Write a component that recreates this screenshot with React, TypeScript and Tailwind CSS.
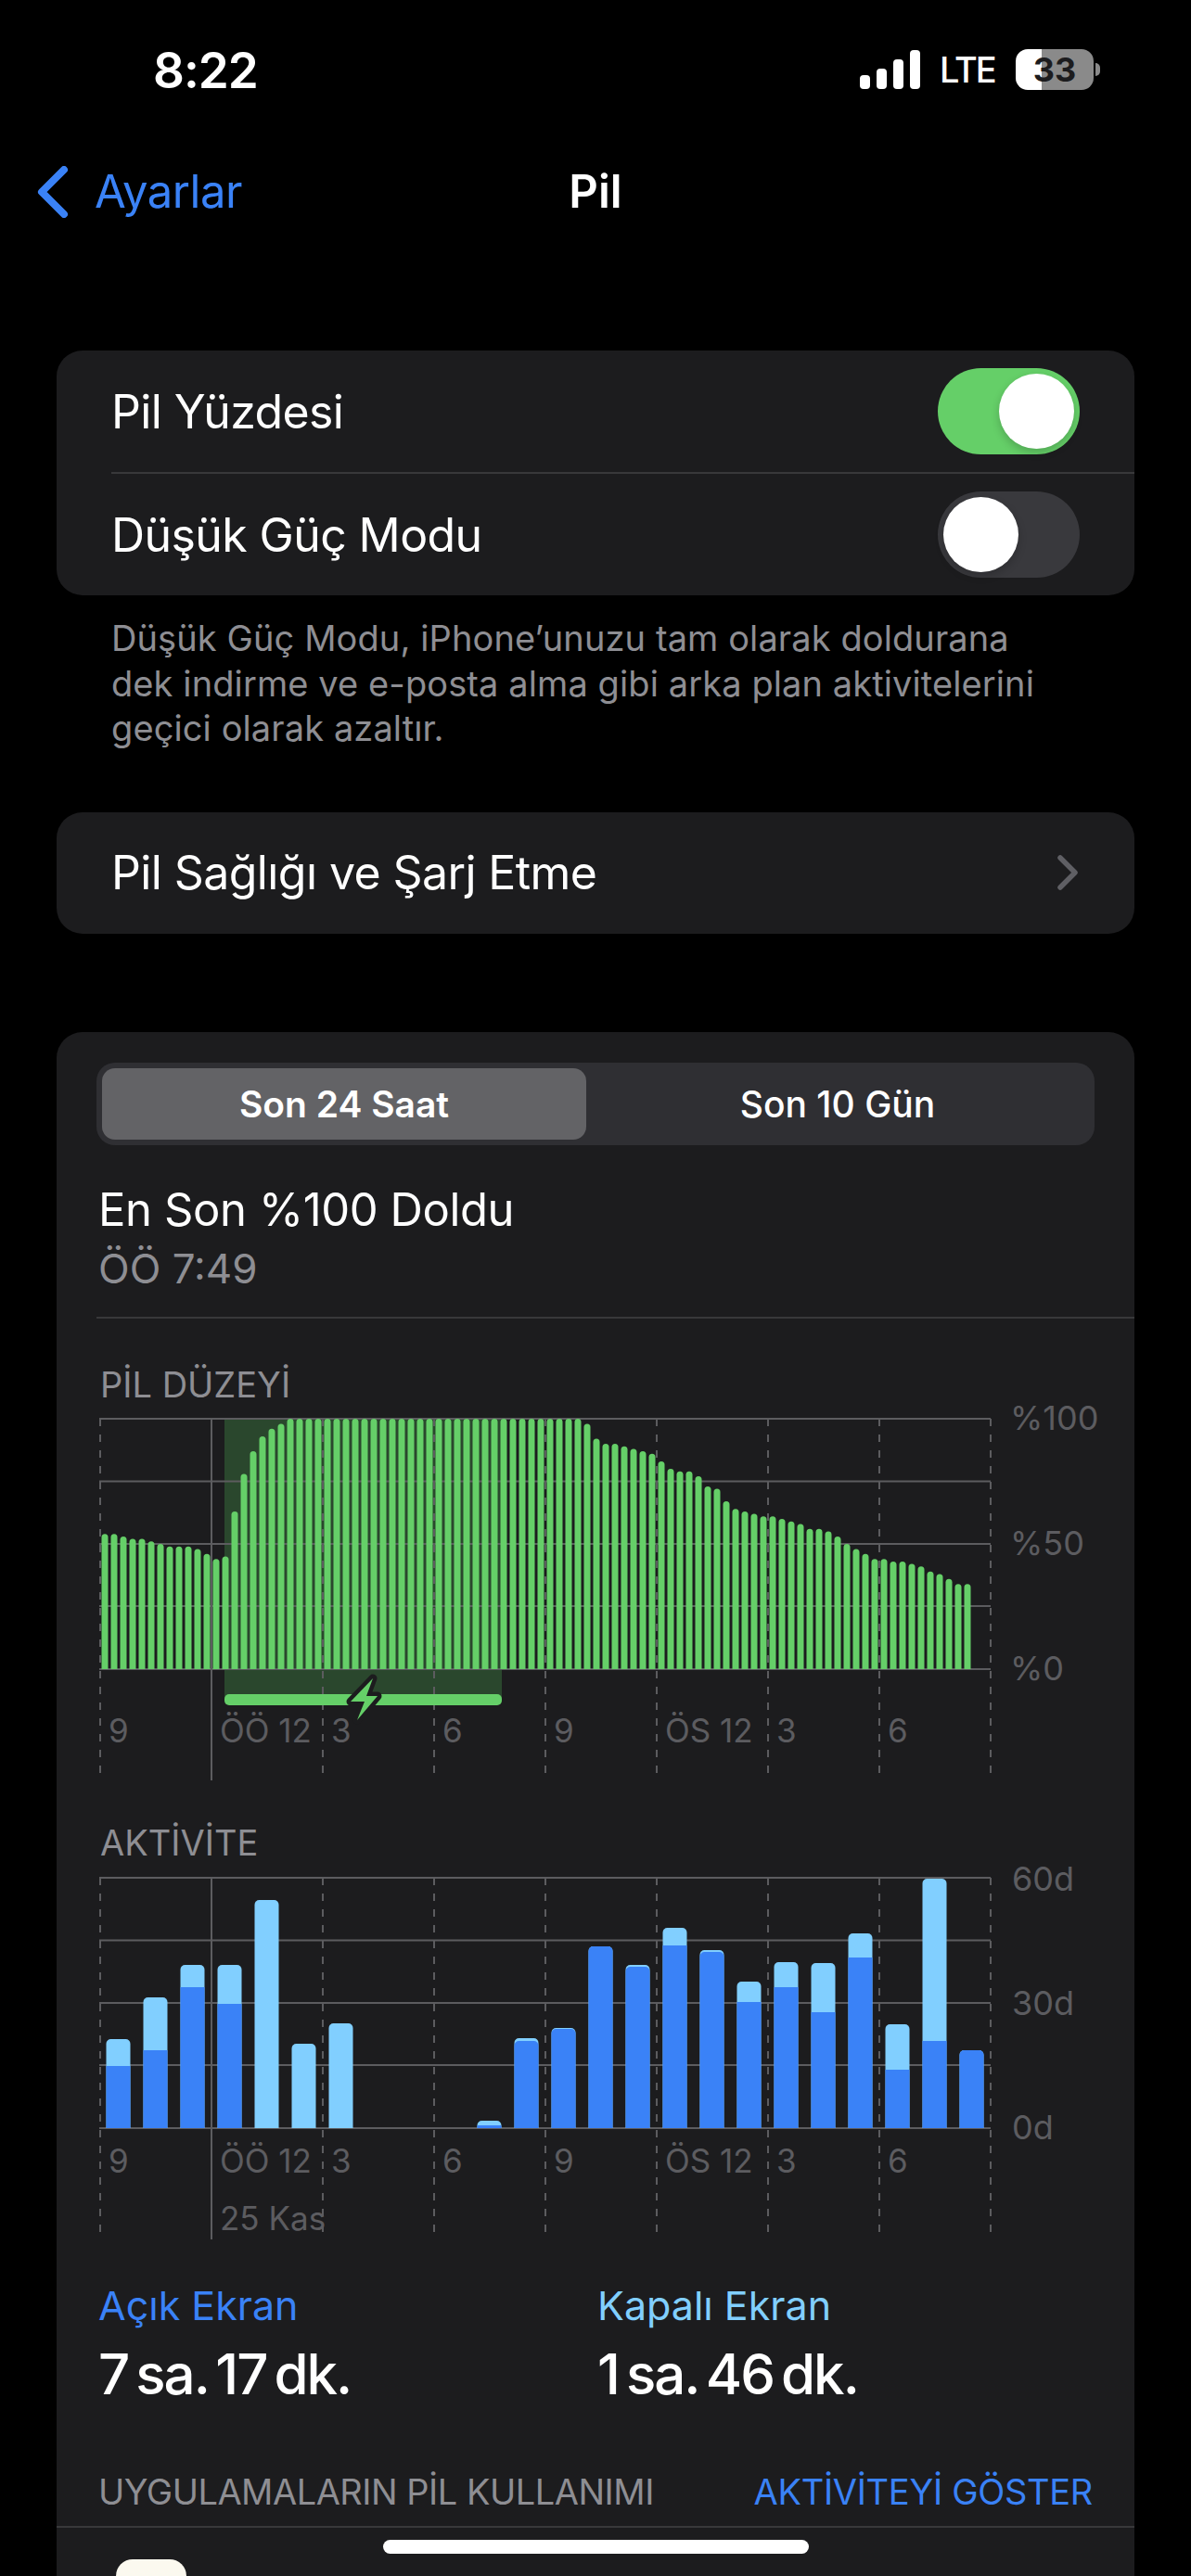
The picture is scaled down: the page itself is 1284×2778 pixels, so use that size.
import React from 'react';

const BATTERY: number[] = [
  54, 54, 53, 52, 52, 51, 50, 49, 49, 49, 48, 46, 44, 45, 63, 78, 87, 93, 96, 98,
  ...Array(32).fill(100),
  98, 92, 90, 90, 89, 88, 87, 86, 83, 80, 79, 79, 77, 73, 72, 67, 64, 63, 62, 61, 61, 60, 59, 58,
  56, 56, 55, 53, 50, 48, 46, 44, 44, 43, 43, 42, 41, 39, 38, 36, 34, 34,
];

// [total top, blue top] as y positions inside the plot (0 = top, 270 = baseline)
const ACTIVITY: [number, number][] = [
  [174, 203], [129, 186], [94, 118], [94, 136], [24, 270], [179, 270], [157, 270],
  [270, 270], [270, 270], [270, 270],
  [262, 267], [173, 176], [162, 163], [74, 74], [94, 96], [54, 73], [78, 80],
  [112, 134], [91, 118], [92, 145], [60, 86], [158, 207], [1, 176], [186, 186],
];

const GRID_X = [0, 120, 240, 360, 480, 600, 720, 840, 960];

function roundedTop(x: number, w: number, top: number, bottom: number, r: number) {
  return `M${x} ${bottom}V${top + r}A${r} ${r} 0 0 1 ${x + r} ${top}H${x + w - r}A${r} ${r} 0 0 1 ${x + w} ${top + r}V${bottom}Z`;
}

function Toggle({ on }: { on: boolean }) {
  return (
    <div className={`flex h-[93px] w-[153px] items-center rounded-full px-[6px] ${on ? 'justify-end bg-[#65cf68]' : 'justify-start bg-[#39393d]'}`}>
      <div className="h-[81px] w-[81px] rounded-full bg-white shadow-[0_4px_10px_rgba(0,0,0,0.2)]" />
    </div>
  );
}

function AxisLabels({ labels }: { labels: string[] }) {
  return (
    <div className="grid w-[960px] grid-cols-8 text-[35px] leading-[42px] text-[#5c5c60]">
      {labels.map((label, i) => (
        <div key={i} className="whitespace-nowrap pl-[10px]">{label}</div>
      ))}
    </div>
  );
}

function GridLines({ bottom, solidBottom }: { bottom: number; solidBottom: number }) {
  return (
    <g>
      {[1, 68.5, 136, 203, 271].map((y) => (
        <line key={y} x1="0" x2="961" y1={y} y2={y} stroke="#5c5c5f" strokeWidth="2" />
      ))}
      {GRID_X.map((x) =>
        x === 120 ? (
          <line key={x} x1={x + 1} x2={x + 1} y1="1" y2={solidBottom} stroke="#5c5c5f" strokeWidth="2" />
        ) : (
          <line key={x} x1={x + 1} x2={x + 1} y1="1" y2={bottom} stroke="#5c5c5f" strokeWidth="2" strokeDasharray="8 9" />
        ),
      )}
    </g>
  );
}

function BatteryChart() {
  return (
    <div className="relative h-[392px] w-[1070px]">
      <svg width="970" height="392" viewBox="0 0 970 392" className="block">
        <rect x="135" y="1" width="299" height="304" fill="#2a472d" />
        <GridLines bottom={384} solidBottom={391} />
        {BATTERY.map((level, i) => {
          const top = 271 - level * 2.7;
          return <path key={i} d={roundedTop(2.5 + i * 10, 7, top, 271, 3.5)} fill="#65cf68" />;
        })}
        <rect x="135" y="298" width="299" height="12" rx="5" fill="#65cf68" />
        <path
          d="M295 281L271 306H286L278 326L300 300H288Z"
          fill="#65cf68"
          stroke="#1c1c1e"
          strokeWidth="9"
          strokeLinejoin="round"
          paintOrder="stroke"
        />
      </svg>
      <div className="absolute left-[982px] top-[-22px] flex h-[314px] flex-col justify-between text-[36px] leading-[44px] text-[#5c5c60]">
        <span>%100</span>
        <span>%50</span>
        <span>%0</span>
      </div>
      <div className="absolute left-0 top-[316px]">
        <AxisLabels labels={['9', 'ÖÖ 12', '3', '6', '9', 'ÖS 12', '3', '6']} />
      </div>
    </div>
  );
}

function ActivityChart() {
  return (
    <div className="relative h-[392px] w-[1070px]">
      <svg width="970" height="392" viewBox="0 0 970 392" className="block">
        <GridLines bottom={385} solidBottom={391} />
        {ACTIVITY.map(([total, blue], i) => {
          const x = 7.5 + i * 40;
          if (total >= 270) return null;
          return (
            <g key={i}>
              <path d={roundedTop(x, 26, total + 1, 271, 5)} fill="#81cfff" />
              {blue < 270 && (
                <path
                  d={blue - total < 5 ? roundedTop(x, 26, blue + 1, 271, 5) : `M${x} ${blue + 1}H${x + 26}V271H${x}Z`}
                  fill="#3a82f7"
                />
              )}
            </g>
          );
        })}
      </svg>
      <div className="absolute left-[984px] top-[-20px] flex h-[312px] flex-col justify-between text-[36px] leading-[44px] text-[#5c5c60]">
        <span>60d</span>
        <span>30d</span>
        <span>0d</span>
      </div>
      <div className="absolute left-0 top-[285px]">
        <AxisLabels labels={['9', 'ÖÖ 12', '3', '6', '9', 'ÖS 12', '3', '6']} />
        <div className="mt-[20px] pl-[130px] text-[35px] leading-[42px] text-[#5c5c60]">25 Kas</div>
      </div>
    </div>
  );
}

export default function App() {
  return (
    <div className="relative h-[2778px] w-[1284px] overflow-hidden bg-black font-['Inter',sans-serif] text-white">
      {/* status bar */}
      <div className="flex h-[150px] items-start justify-between pl-[165px] pr-[98px] pt-[46px]">
        <span className="text-[53px] font-semibold leading-[60px] tracking-[-1px]">8:22</span>
        <div className="flex items-center gap-[20px] pt-[7px]">
          <svg width="66" height="42" viewBox="0 0 66 42" fill="#fff">
            <rect x="0" y="27" width="11" height="15" rx="4" />
            <rect x="18" y="20" width="11" height="22" rx="4" />
            <rect x="36" y="10" width="11" height="32" rx="4" />
            <rect x="54" y="0" width="11" height="42" rx="4" />
          </svg>
          <span className="w-[62px] text-[38px] font-medium leading-[42px] tracking-[-2px]">LTE</span>
          <div className="flex items-center gap-[2px]">
            <div className="flex h-[44px] w-[84px] items-center justify-center rounded-[13px] bg-[linear-gradient(90deg,#fff_33%,#8a8a8a_33%)] text-[36px] font-bold leading-none text-[#1c1c1e]">
              33
            </div>
            <div className="h-[14px] w-[5px] rounded-r-full bg-[#8a8a8a]" />
          </div>
        </div>
      </div>

      {/* nav bar */}
      <div className="relative flex h-[114px] items-center justify-center">
        <div className="absolute left-[40px] top-[29px] flex items-center gap-[28px]">
          <svg width="34" height="56" viewBox="0 0 34 56" fill="none" stroke="#3a82f7" strokeWidth="8" strokeLinecap="round" strokeLinejoin="round">
            <path d="M29 4L5 28L29 52" />
          </svg>
          <span className="text-[49px] leading-[56px] tracking-[-0.5px] text-[#3a82f7]">Ayarlar</span>
        </div>
        <span className="text-[49px] font-semibold leading-[56px]">Pil</span>
      </div>

      {/* toggles */}
      <div className="mx-[61px] mt-[114px] rounded-[28px] bg-[#1c1c1e]">
        <div className="flex h-[131px] items-center justify-between pl-[59px] pr-[59px]">
          <span className="text-[50px] leading-[60px] tracking-[-0.6px]">Pil Yüzdesi</span>
          <Toggle on />
        </div>
        <div className="ml-[59px] h-[2px] bg-[#38383a]" />
        <div className="flex h-[131px] items-center justify-between pl-[59px] pr-[59px]">
          <span className="text-[50px] leading-[60px] tracking-[-0.6px]">Düşük Güç Modu</span>
          <Toggle on={false} />
        </div>
      </div>
      <p className="ml-[120px] mt-[22px] w-[1060px] text-[38px] leading-[48.5px] tracking-[0.1px] text-[#8e8e93]">
        Düşük Güç Modu, iPhone’unuzu tam olarak doldurana
        <br />
        dek indirme ve e-posta alma gibi arka plan aktivitelerini
        <br />
        geçici olarak azaltır.
      </p>

      {/* battery health */}
      <div className="mx-[61px] mt-[66px] flex h-[131px] items-center justify-between rounded-[28px] bg-[#1c1c1e] pl-[59px] pr-[60px]">
        <span className="text-[50px] leading-[60px] tracking-[-0.6px]">Pil Sağlığı ve Şarj Etme</span>
        <svg width="24" height="38" viewBox="0 0 24 38" fill="none" stroke="#5f5f64" strokeWidth="5.5" strokeLinecap="round" strokeLinejoin="round">
          <path d="M4 3L20 19L4 35" />
        </svg>
      </div>

      {/* usage card */}
      <div className="ml-[61px] mr-[61px] mt-[106px] h-[1700px] rounded-t-[28px] bg-[#1c1c1e] pt-[33px]">
        <div className="mx-[43px] flex h-[89px] rounded-[20px] bg-[#2f2f33] p-[6px] text-[39px] font-semibold leading-none">
          <div className="flex w-[522px] items-center justify-center rounded-[14px] bg-[#636366]">Son 24 Saat</div>
          <div className="flex flex-1 items-center justify-center font-medium">Son 10 Gün</div>
        </div>

        <div className="ml-[45px] mt-[40px] text-[49px] leading-[60px] tracking-[-0.4px]">En Son %100 Doldu</div>
        <div className="ml-[45px] mt-[6px] text-[44px] leading-[54px] text-[#8e8e93]">ÖÖ 7:49</div>
        <div className="ml-[43px] mt-[25px] h-[2px] bg-[#38383a]" />

        <div className="ml-[47px] mt-[48px] text-[38px] leading-[46px] text-[#8e8e93]">PİL DÜZEYİ</div>
        <div className="ml-[46px] mt-[13px]">
          <BatteryChart />
        </div>

        <div className="ml-[47px] mt-[43px] text-[38px] leading-[46px] text-[#8e8e93]">AKTİVİTE</div>
        <div className="ml-[46px] mt-[14px]">
          <ActivityChart />
        </div>

        <div className="ml-[45px] mt-[44px] flex">
          <div className="w-[538px]">
            <div className="text-[43px] leading-[52px] text-[#3a82f7]">Açık Ekran</div>
            <div className="mt-[12px] text-[60px] font-medium leading-[72px] tracking-[-2px] [word-spacing:-6px]">7 sa. 17 dk.</div>
          </div>
          <div>
            <div className="text-[43px] leading-[52px] text-[#81cfff]">Kapalı Ekran</div>
            <div className="mt-[12px] text-[60px] font-medium leading-[72px] tracking-[-2px] [word-spacing:-6px]">1 sa. 46 dk.</div>
          </div>
        </div>

        <div className="mx-[45px] mt-[68px] flex items-center justify-between text-[38px] leading-[46px]">
          <span className="tracking-[-0.5px] text-[#8e8e93]">UYGULAMALARIN PİL KULLANIMI</span>
          <span className="tracking-[-0.3px] text-[#3a82f7]">AKTİVİTEYİ GÖSTER</span>
        </div>
        <div className="mt-[14px] h-[2px] bg-[#38383a]" />
        <div className="ml-[64px] mt-[34px] h-[76px] w-[76px] rounded-[18px] bg-[#fbf9ef]" />
      </div>

      {/* home indicator */}
      <div className="absolute bottom-[24px] left-[413px] h-[15px] w-[459px] rounded-full bg-white" />
    </div>
  );
}
